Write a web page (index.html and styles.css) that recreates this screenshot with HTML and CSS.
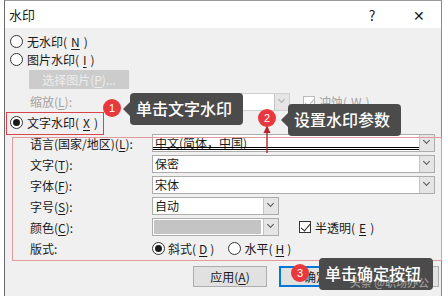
FILE: index.html
```html
<!DOCTYPE html>
<html lang="zh-CN">
<head>
    <meta charset="UTF-8">
    <title>水印</title>
    <link rel="stylesheet" href="styles.css">
</head>
<body>
    <div class="page">
        <div class="dialog">
            <div class="titlebar">
                <span class="title">水印</span>
                <span class="help">?</span>
                <span class="close">✕</span>
            </div>

            <div class="content">
                <label class="radio-row">
                    <span class="radio"></span>无水印(<u>N</u>)
                </label>
                <label class="radio-row">
                    <span class="radio"></span>图片水印(<u>I</u>)
                </label>
                <div class="pick-btn">选择图片(<u>P</u>)...</div>

                <div class="scale-row">
                    <span class="label disabled">缩放(<u>L</u>):</span>
                    <div class="select disabled-select small-select"><span class="value">自动</span><span class="arrow"></span></div>
                    <label class="check disabled"><span class="box checked-dim"></span>冲蚀(<u>W</u>)</label>
                </div>

                <label class="radio-row text-mark">
                    <span class="radio on"></span>文字水印(<u>X</u>)
                </label>

                <div class="group">
                    <span class="label">语言(国家/地区)(<u>L</u>):</span>
                    <div class="select"><span class="value lang">中文(简体，中国)</span><span class="arrow"></span></div>

                    <span class="label">文字(<u>T</u>):</span>
                    <div class="select"><span class="value">保密</span><span class="arrow"></span></div>

                    <span class="label">字体(<u>F</u>):</span>
                    <div class="select"><span class="value">宋体</span><span class="arrow"></span></div>

                    <span class="label">字号(<u>S</u>):</span>
                    <div class="select small"><span class="value">自动</span><span class="arrow"></span></div>

                    <span class="label">颜色(<u>C</u>):</span>
                    <div class="color-line">
                        <div class="select small"><span class="value"><span class="swatch"></span></span><span class="arrow"></span></div>
                        <label class="check"><span class="box checked"></span>半透明(<u>E</u>)</label>
                    </div>

                    <span class="label">版式:</span>
                    <div class="layout-line">
                        <label class="opt"><span class="radio on"></span>斜式(<u>D</u>)</label>
                        <label class="opt"><span class="radio"></span>水平(<u>H</u>)</label>
                    </div>
                </div>

                <div class="buttons">
                    <div class="btn">应用(<u>A</u>)</div>
                    <div class="btn primary">确定</div>
                    <div class="btn">取消</div>
                </div>
            </div>
        </div>

        <!-- annotation layer -->
        <div class="mark-box small-box"></div>
        <div class="mark-box big-box"></div>

        <div class="badge b1">1</div>
        <div class="tip t1">单击文字水印</div>

        <svg class="pointer" width="10" height="30" viewBox="0 0 10 30">
            <path d="M5 29 L5 3" stroke="#b3262c" stroke-width="1.4" fill="none"/>
            <path d="M1.5 9 L5 1.5 L8.5 9 Z" fill="#b3262c"/>
        </svg>
        <div class="badge b2">2</div>
        <div class="tip t2">设置水印参数</div>

        <div class="badge b3">3</div>
        <div class="tip t3">单击确定按钮<span class="wm">头条 @职场办公</span></div>
    </div>
</body>
</html>
```

FILE: styles.css
```css
* {
    box-sizing: border-box;
}

body {
    margin: 0;
    background: #ffffff;
    font-family: "Noto Sans CJK SC", "Noto Sans", sans-serif;
    font-size: 12px;
    color: #1a1a1a;
}

u {
    text-decoration: underline;
    text-underline-offset: 2px;
}

.page {
    position: relative;
    width: 445px;
    height: 296px;
    overflow: hidden;
}

.dialog {
    margin-left: 4px;
    width: 438px;
    height: 296px;
    border-left: 1px solid #6b6b6b;
    border-right: 1px solid #8a8a8a;
    border-top: 1px solid #9a9a9a;
    background: #f0f0f0;
}

.titlebar {
    height: 27px;
    background: #ffffff;
    display: flex;
    align-items: center;
    padding-left: 4px;
}

.title {
    flex-grow: 1;
    font-size: 13px;
}

.help {
    font-size: 14px;
    width: 46px;
    text-align: center;
    margin-right: 2px;
}

.close {
    font-size: 14px;
    width: 44px;
    text-align: center;
}

.content {
    padding: 4px 0 0 5px;
}

.radio-row {
    display: flex;
    align-items: center;
    gap: 4px;
    height: 18px;
}

.radio {
    width: 13px;
    height: 13px;
    border: 1px solid #333;
    border-radius: 50%;
    background: #fff;
    position: relative;
    flex-shrink: 0;
}

.radio.on:after {
    content: "";
    position: absolute;
    left: 2px;
    top: 2px;
    width: 7px;
    height: 7px;
    border-radius: 50%;
    background: #1a1a1a;
}

.pick-btn {
    margin: 2px 0 0 19px;
    width: 100px;
    height: 19px;
    background: #cccccc;
    color: #ececec;
    text-align: center;
    line-height: 19px;
}

.scale-row {
    display: flex;
    align-items: center;
    height: 17px;
    margin-top: 4px;
    padding-left: 20px;
}

.scale-row .label {
    width: 122px;
}

.label {
    white-space: nowrap;
}

.disabled {
    color: #a3a3a3;
}

.select {
    display: flex;
    height: 18px;
    background: #fff;
    border: 1px solid #acacac;
    width: 283px;
}

.select .value {
    flex-grow: 1;
    padding-left: 2px;
    line-height: 16px;
}

.select .arrow {
    width: 15px;
    background: #e5e5e5;
    border-left: 1px solid #c4c4c4;
    position: relative;
}

.select .arrow:after {
    content: "";
    position: absolute;
    left: 4px;
    top: 3px;
    width: 4px;
    height: 4px;
    border-right: 1px solid #555;
    border-bottom: 1px solid #555;
    transform: rotate(45deg);
}

.small-select {
    width: 138px;
}

.disabled-select {
    border-color: #cfcfcf;
    color: #a3a3a3;
}

.disabled-select .arrow:after {
    border-color: #aaa;
}

.small {
    width: 127px;
}

.check {
    display: flex;
    align-items: center;
    gap: 4px;
    white-space: nowrap;
}

.scale-row .check {
    margin-left: 13px;
}

.box {
    width: 12px;
    height: 12px;
    border: 1px solid #333;
    background: #fff;
    position: relative;
}

.box.checked:after,
.box.checked-dim:after {
    content: "";
    position: absolute;
    left: 3px;
    top: 0;
    width: 4px;
    height: 8px;
    border-right: 1.5px solid #222;
    border-bottom: 1.5px solid #222;
    transform: rotate(40deg);
}

.box.checked-dim {
    border-color: #bcbcbc;
}

.box.checked-dim:after {
    border-color: #b5b5b5;
}

.text-mark {
    height: 21px;
    margin-top: 2px;
}

.group {
    display: grid;
    grid-template-columns: 122px auto;
    grid-auto-rows: 18px;
    row-gap: 3px;
    align-items: center;
    padding-left: 20px;
    margin-top: 1px;
}

.lang {
    position: relative;
}

.lang:after {
    content: "";
    position: absolute;
    left: 0;
    right: 0;
    bottom: 1px;
    border-bottom: 3px double #000;
}

.select .value:has(.swatch) {
    padding: 1px 2px 1px 1px;
}

.swatch {
    display: block;
    height: 14px;
    background: #c4c4c4;
}

.color-line {
    display: flex;
    align-items: center;
    gap: 20px;
}

.layout-line {
    display: flex;
    align-items: center;
    gap: 14px;
}

.opt {
    display: flex;
    align-items: center;
    gap: 3px;
}

.buttons {
    display: flex;
    gap: 12px;
    margin: 9px 0 0 183px;
}

.btn {
    width: 74px;
    height: 21px;
    background: #e1e1e1;
    border: 1px solid #adadad;
    text-align: center;
    line-height: 19px;
}

.btn.primary {
    border: 2px solid #0078d7;
    line-height: 17px;
}

/* annotations */
.mark-box {
    position: absolute;
    border: 1px solid #d9434a;
}

.small-box {
    left: 6px;
    top: 112px;
    width: 98px;
    height: 23px;
}

.big-box {
    left: 12px;
    top: 137px;
    width: 430px;
    height: 124px;
    border-color: #e39a9d;
}

.badge {
    position: absolute;
    width: 18px;
    height: 18px;
    border-radius: 50%;
    background: #e8383d;
    color: #fff;
    font-family: "Liberation Sans", sans-serif;
    font-size: 11px;
    line-height: 18px;
    text-align: center;
}

.b1 { left: 103px; top: 99px; }
.b2 { left: 258px; top: 109px; }
.b3 { left: 291px; top: 264px; }

.pointer {
    position: absolute;
    left: 262px;
    top: 124px;
}

.tip {
    position: absolute;
    background: #4b4b4b;
    color: #fff;
    border-radius: 4px;
    font-size: 16px;
    font-weight: 500;
    padding-left: 6px;
    white-space: nowrap;
}

.tip:before {
    content: "";
    position: absolute;
    left: -7px;
    top: 50%;
    margin-top: -7px;
    border-top: 7px solid transparent;
    border-bottom: 7px solid transparent;
    border-right: 7px solid #4b4b4b;
}

.t1 {
    left: 130px;
    top: 93px;
    width: 113px;
    height: 32px;
    line-height: 31px;
}

.t2 {
    left: 288px;
    top: 104px;
    width: 113px;
    height: 32px;
    line-height: 31px;
}

.t3 {
    left: 319px;
    top: 258px;
    width: 114px;
    height: 32px;
    line-height: 31px;
}

.t3:before {
    display: none;
}

.wm {
    position: absolute;
    right: 4px;
    bottom: 2px;
    font-size: 11px;
    line-height: 12px;
    color: rgba(255, 255, 255, 0.45);
}
```
